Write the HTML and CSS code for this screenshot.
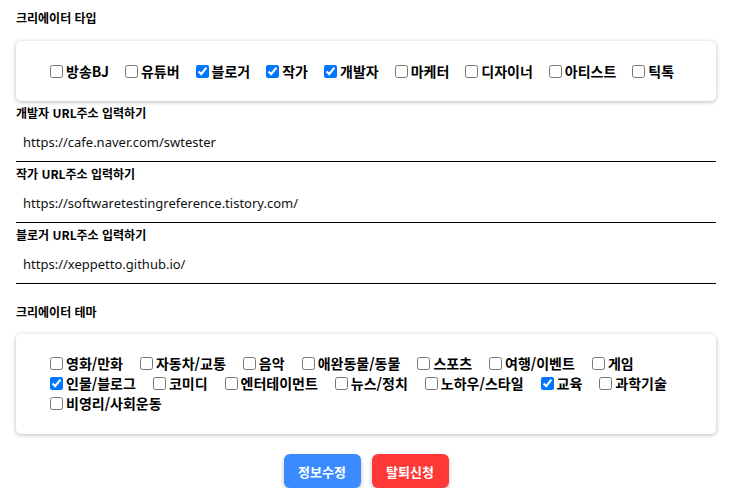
FILE: index.html
```html
<!DOCTYPE html>
<html lang="ko">
<head>
<meta charset="utf-8">
<link rel="stylesheet" href="styles.css">
</head>
<body>
<div class="page">
  <div class="section-title">크리에이터 타입</div>
  <div class="card card-type">
    <label class="opt"><input type="checkbox">방송BJ</label>
    <label class="opt"><input type="checkbox">유튜버</label>
    <label class="opt"><input type="checkbox" checked>블로거</label>
    <label class="opt"><input type="checkbox" checked>작가</label>
    <label class="opt"><input type="checkbox" checked>개발자</label>
    <label class="opt"><input type="checkbox">마케터</label>
    <label class="opt"><input type="checkbox">디자이너</label>
    <label class="opt"><input type="checkbox">아티스트</label>
    <label class="opt"><input type="checkbox">틱톡</label>
  </div>

  <div class="field">
    <div class="field-label">개발자 URL주소 입력하기</div>
    <input class="field-input" type="text" value="https://cafe.naver.com/swtester">
  </div>
  <div class="field">
    <div class="field-label">작가 URL주소 입력하기</div>
    <input class="field-input" type="text" value="https://softwaretestingreference.tistory.com/">
  </div>
  <div class="field">
    <div class="field-label">블로거 URL주소 입력하기</div>
    <input class="field-input" type="text" value="https://xeppetto.github.io/">
  </div>

  <div class="section-title theme-title">크리에이터 테마</div>
  <div class="card card-theme">
    <label class="opt"><input type="checkbox">영화/만화</label>
    <label class="opt"><input type="checkbox">자동차/교통</label>
    <label class="opt"><input type="checkbox">음악</label>
    <label class="opt"><input type="checkbox">애완동물/동물</label>
    <label class="opt"><input type="checkbox">스포츠</label>
    <label class="opt"><input type="checkbox">여행/이벤트</label>
    <label class="opt"><input type="checkbox">게임</label>
    <label class="opt"><input type="checkbox" checked>인물/블로그</label>
    <label class="opt"><input type="checkbox">코미디</label>
    <label class="opt"><input type="checkbox">엔터테이먼트</label>
    <label class="opt"><input type="checkbox">뉴스/정치</label>
    <label class="opt"><input type="checkbox">노하우/스타일</label>
    <label class="opt"><input type="checkbox" checked>교육</label>
    <label class="opt"><input type="checkbox">과학기술</label>
    <label class="opt"><input type="checkbox">비영리/사회운동</label>
  </div>

  <div class="actions">
    <button class="btn btn-blue" type="button">정보수정</button>
    <button class="btn btn-red" type="button">탈퇴신청</button>
  </div>
</div>
</body>
</html>
```

FILE: styles.css
```css
html, body {
  margin: 0;
  padding: 0;
  background: #ffffff;
}
body {
  font-family: "Noto Sans CJK KR", "Noto Sans", sans-serif;
  color: #000;
}
.page {
  width: 700px;
  margin-left: 16px;
  padding-top: 10px;
}
.section-title {
  font-size: 12px;
  font-weight: 700;
  line-height: 16px;
  height: 16px;
}
.card {
  margin-top: 15px;
  background: #fff;
  border-radius: 5px;
  box-shadow: 0 1px 4px rgba(0, 0, 0, 0.28);
  padding: 20px 30px;
  display: flex;
  flex-wrap: wrap;
  column-gap: 13px;
}
.card-type {
  height: 20px;
  column-gap: 12px;
  flex-wrap: nowrap;
}
.opt {
  display: inline-flex;
  align-items: center;
  font-size: 14px;
  font-weight: 700;
  line-height: 20px;
  height: 20px;
  white-space: nowrap;
}
.opt input {
  width: 13px;
  height: 13px;
  margin: 0 3px 0 4px;
}
.field {
  display: flex;
  flex-direction: column;
}
.field:first-of-type {
  margin-top: 4px;
}
.field-label {
  font-size: 12px;
  font-weight: 700;
  line-height: 16px;
  margin-top: 4px;
}
.field-input {
  border: none;
  border-bottom: 1.5px solid #000;
  outline: none;
  font-family: "Noto Sans", sans-serif;
  font-size: 13px;
  color: #111;
  height: 39px;
  padding: 0 7px;
  box-sizing: border-box;
  margin-top: 2px;
}
.theme-title {
  margin-top: 20px;
}
.card-theme {
  margin-top: 14px;
  padding: 19px 30px 21px;
  row-gap: 0;
}
.actions {
  display: flex;
  justify-content: center;
  gap: 11px;
  margin-top: 20px;
}
.btn {
  border: none;
  border-radius: 6px;
  width: 77px;
  height: 34px;
  color: #fff;
  font-family: "Noto Sans CJK KR", sans-serif;
  font-weight: 700;
  font-size: 13px;
  box-shadow: 0 2px 4px rgba(0, 0, 0, 0.25);
}
.btn-blue {
  background: #3a8bff;
}
.btn-red {
  background: #ff3838;
}
```
